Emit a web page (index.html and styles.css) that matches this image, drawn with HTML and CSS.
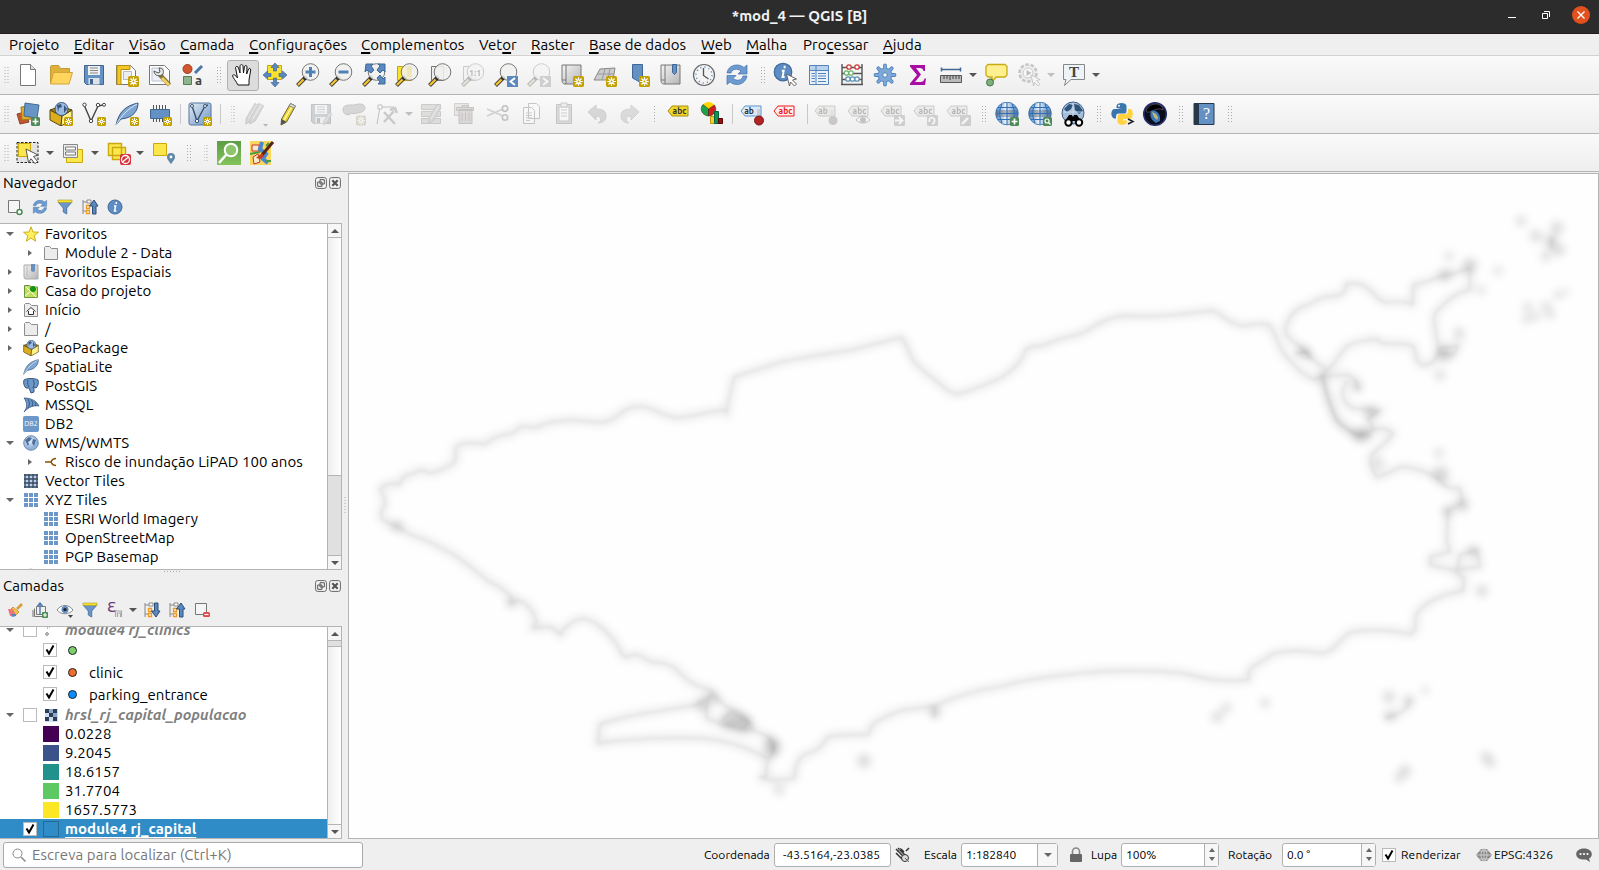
FILE: index.html
```html
<!DOCTYPE html>
<html lang="pt-BR">
<head>
<meta charset="utf-8">
<title>*mod_4 — QGIS [B]</title>
<link rel="stylesheet" href="styles.css">
</head>
<body>
<svg class="defs" width="0" height="0">
  <defs>
    <linearGradient id="gGrey" x1="0" y1="0" x2="1" y2="1"><stop offset="0" stop-color="#f4f4f4"/><stop offset="1" stop-color="#b5b5b5"/></linearGradient>
    <linearGradient id="gBlue" x1="0" y1="0" x2="1" y2="1"><stop offset="0" stop-color="#e4ecf5"/><stop offset="1" stop-color="#6c94c4"/></linearGradient>
    <linearGradient id="gGreen" x1="0" y1="0" x2="0" y2="1"><stop offset="0" stop-color="#5c9c45"/><stop offset="1" stop-color="#84c35c"/></linearGradient>
    <linearGradient id="gBand"><stop offset="0" stop-color="#4f88c8"/><stop offset=".45" stop-color="#f0f4f8"/><stop offset=".75" stop-color="#8fb2da"/><stop offset="1" stop-color="#4f88c8"/></linearGradient>
    <radialGradient id="gEarth" cx=".4" cy=".35"><stop offset="0" stop-color="#eef4fb"/><stop offset="1" stop-color="#8fb1da"/></radialGradient>
    <filter id="soft" x="-5%" y="-5%" width="110%" height="110%"><feGaussianBlur stdDeviation="4"/></filter>
    <filter id="softer" x="-5%" y="-5%" width="110%" height="110%"><feGaussianBlur stdDeviation="1.6"/></filter>
    <symbol id="star" viewBox="0 0 9 9"><rect width="9" height="9" rx="1.500" fill="#c4a000"/><path d="M4.500 1v7M1 4.500h7M2 2l5 5M7 2l-5 5" stroke="#fff" stroke-width="1"/><circle cx="4.500" cy="4.500" r="1.700" fill="#fff"/><circle cx="4.500" cy="4.500" r=".8" fill="#c4a000"/></symbol>
    <symbol id="plus" viewBox="0 0 9 9"><rect width="9" height="9" rx="1.500" fill="#4d8a57"/><path d="M4.500 1.500v6M1.500 4.500h6" stroke="#fff" stroke-width="1.700"/></symbol>
    <symbol id="lens" viewBox="0 0 24 24"><path d="M9 15L1.500 22.500" stroke="#3a3a3a" stroke-width="4"/><path d="M7.500 16.500L2 22" stroke="#f2c230" stroke-width="2.400"/><path d="M10.500 13.500l-2 2" stroke="#111" stroke-width="4"/><circle cx="14.500" cy="9" r="8.300" fill="#f0f0ee" fill-opacity=".88" stroke="#777" stroke-width="1"/></symbol>
    <symbol id="globe" viewBox="0 0 24 24"><circle cx="12" cy="11.500" r="11.300" fill="url(#gBand)" stroke="#4a7fb8"/><path d="M1 8h22v7H1z" fill="#4a4f58" fill-opacity=".35"/><path d="M3 5.500h18M1.500 11.500h21M3 17.500h18M7 2C4 8 4 15 7 21M17 2c3 6 3 13 0 19M12 .5v22" fill="none" stroke="#2f6fb5" stroke-width="1.100"/></symbol>
    <symbol id="earth" viewBox="0 0 16 16"><circle cx="8" cy="8" r="7.300" fill="url(#gEarth)" stroke="#6f8db1"/><path d="M2 5l4-3 3 1-2 3-2 1 1 2-1 2zM10 4l3 1-1 3-1 3-2-3z" fill="#4c6f9a"/></symbol>
    <symbol id="tag" viewBox="0 0 22 12"><path d="M1 6l4-5h16v10H5z"/></symbol>
    <symbol id="pencil" viewBox="0 0 24 24"><path d="M15.500 1.500l5 2.500-9 16L6 23l.5-6z" fill="#e9cf2f" stroke="#6e6536"/><path d="M18 3l-9 15" stroke="#fff7a0" stroke-width="1.500"/><path d="M6.500 17l5 3L6 23z" fill="#555"/><path d="M15.500 1.500l5 2.500-1.300 2.200-5-2.500z" fill="#ddd" stroke="#888"/></symbol>
    <symbol id="gpencil" viewBox="0 0 24 24"><path d="M15.500 1.500l5 2.500-9 16L6 23l.5-6z" fill="#a99" stroke="#777"/><path d="M18 3l-9 15" stroke="#ccc" stroke-width="1.500"/></symbol>
    <symbol id="disk" viewBox="0 0 24 24"><path d="M2.500 2.500h19v19h-17l-2-2z" fill="#6491c4" stroke="#42658f"/><path d="M6 3h12v9H6z" fill="#f0f0f0"/><path d="M8 5h8M8 7.500h8M8 10h8" stroke="#888"/><path d="M6.500 15h11v6.500h-11z" fill="#dfe3e8"/><path d="M8 16h3v5H8z" fill="#42658f"/></symbol>
    <symbol id="folder" viewBox="0 0 16 16"><path d="M1.500 14.500v-12l1-1h4l2 2h6v11z" fill="#ececec" stroke="#8d8d8d"/></symbol>
    <symbol id="refresh" viewBox="0 0 24 24"><path d="M2 10C3 4 8 2 12 2c3 0 5 1 7 2.500L22 2v9h-9l3-3c-4-3-9-2-10 2z" fill="#6d9bd0" stroke="#3f70ab" stroke-width=".7"/><path d="M22 13c-1 6-6 8.500-10 8.500-3 0-5-1-7-2.500l-3 2.500v-9h9l-3 3c4 3 9 2 10-2.500z" fill="#6d9bd0" stroke="#3f70ab" stroke-width=".7"/></symbol>
    <symbol id="box" viewBox="0 0 24 24"><path d="M1 8l12 6-1 10L1 18z" fill="#dcae1c" stroke="#574812"/><path d="M13 14l10-6v10l-11 6z" fill="#fff18a" stroke="#574812"/><path d="M1 8l11-4 11 4-10 6z" fill="#a9820d" stroke="#574812"/><circle cx="12.500" cy="7" r="6.500" fill="#9dbbe0" stroke="#3c5a80"/><path d="M8 3l4-1 1 3-3 1-1 4zM15 3l3 4-3 4z" fill="#34567f"/></symbol>
    <symbol id="feather" viewBox="0 0 24 24"><path d="M1 23C4 10 10 4 23 1c0 8-5 15-17 16z" fill="#7fa6d3" stroke="#35567f"/><path d="M1 23C7 13 13 7 22 2" fill="none" stroke="#dce8f5"/></symbol>
    <symbol id="funnel" viewBox="0 0 16 16"><path d="M1 3h14L9.700 9v6L6.300 13V9z" fill="#6b96c9" stroke="#4d78ab"/><path d="M1 1h14v2.500H1z" fill="#f5e02f" stroke="#a99a2e" stroke-width=".6"/></symbol>
    <symbol id="grid" viewBox="0 0 16 16"><path d="M1 1h4v4H1zm5 0h4v4H6zm5 0h4v4h-4zM1 6h4v4H1zm5 0h4v4H6zm5 0h4v4h-4zM1 11h4v4H1zm5 0h4v4H6zm5 0h4v4h-4z" fill="#6b97c9"/></symbol>
    <symbol id="treelist" viewBox="0 0 16 16"><path d="M1 1v14M1 3h4M1 12h4" stroke="#888" fill="none"/><path d="M5 1h4v3H5z" fill="#fff" stroke="#888"/><path d="M4.500 6.500h3v3h-3zM4.500 11.500h3v3h-3z" fill="#fff" stroke="#ee9a20" stroke-width="1.300"/></symbol>
    <symbol id="info" viewBox="0 0 16 16"><circle cx="8" cy="8" r="7" fill="#5d8cc4" stroke="#41699b"/><path d="M9.300 3v2M7 7h1.600L7.600 12h1.700" stroke="#fff" stroke-width="1.500" fill="none"/></symbol>
    <symbol id="scroll" viewBox="0 0 24 24"><path d="M6 2h15v19H5c-3 0-3-3-3-4V2z" fill="url(#gGrey)" stroke="#777"/><path d="M6 2v15H2M6 17v4" fill="none" stroke="#777"/></symbol>
    <symbol id="cursor" viewBox="0 0 12 14"><path d="M1 1l10 5-4 1 4 4-2 2-4-4-1 4z" fill="#fff" stroke="#666"/></symbol>
    <symbol id="restore" viewBox="0 0 12 12"><rect x=".6" y=".6" width="10.800" height="10.800" rx="2" fill="#f5f5f5" stroke="#666"/><path d="M5 2.700h4.300V7H5zM2.700 5H7v4.300H2.700z" fill="#f5f5f5" stroke="#555"/></symbol>
    <symbol id="shut" viewBox="0 0 12 12"><rect x=".6" y=".6" width="10.800" height="10.800" rx="2" fill="#f5f5f5" stroke="#666"/><path d="M3.300 3.300l5.400 5.400M8.700 3.300L3.300 8.700" stroke="#555" stroke-width="2.200"/></symbol>
    <symbol id="tick" viewBox="0 0 14 14"><path d="M3.500 6.500L6 10.500 10.500 2.500" fill="none" stroke="#000" stroke-width="2"/></symbol>
    <symbol id="layers" viewBox="0 0 24 24"><path d="M1 12l8-2 4 10-9 2z" fill="#c2592e" stroke="#8b4427"/><path d="M5 5l10-1v13l-9 1z" fill="#e6ab25" stroke="#9b781c"/><path d="M9 1l14 2-2 13-13-2z" fill="#6895c8" stroke="#44698f"/></symbol>
  </defs>
</svg>

<header class="titlebar">
  <span class="title">*mod_4 — QGIS [B]</span>
  <div class="winbtns">
    <svg width="12" height="18"><path d="M2 11.500h8" stroke="#fff"/></svg>
    <svg width="12" height="18"><path d="M3.500 7.500h5v5h-5zM5 5.500h5.500V11" fill="none" stroke="#fff" stroke-width="1"/></svg>
    <svg width="18" height="18"><circle cx="9" cy="9" r="9" fill="#e2501d"/><path d="M5.500 5.500l7 7M12.500 5.500l-7 7" stroke="#fff" stroke-width="1.300"/></svg>
  </div>
</header>

<nav class="menubar">
  <span class="m1">Pro<u>j</u>eto</span><span class="m2"><u>E</u>ditar</span><span class="m3"><u>V</u>isão</span><span class="m4"><u>C</u>amada</span><span class="m5"><u>C</u>onfigurações</span><span class="m6"><u>C</u>omplementos</span><span class="m7">Vet<u>o</u>r</span><span class="m8"><u>R</u>aster</span><span class="m9"><u>B</u>ase de dados</span><span class="m10"><u>W</u>eb</span><span class="m11"><u>M</u>alha</span><span class="m12">Pro<u>c</u>essar</span><span class="m13"><u>A</u>juda</span>
</nav>

<div class="toolbar">
  <i class="handle first"></i>
  <b><svg viewBox="0 0 24 24"><path d="M4.500 1.500h10l5 5v16h-15z" fill="#fff" stroke="#777"/><path d="M14.500 1.500v5h5" fill="#ddd" stroke="#777"/></svg></b>
  <b><svg viewBox="0 0 24 24"><path d="M1.500 20.500v-17l1-1h7l2 3h9v4" fill="#e0b13a" stroke="#c09a35"/><path d="M1.500 21l3-11.500h19L20 21z" fill="#ffd55e" stroke="#d2a63b"/></svg></b>
  <b><svg><use href="#disk"/></svg></b>
  <b><svg viewBox="0 0 24 24"><path d="M1.500 2.500h14l5 5v14h-19z" fill="#fff" stroke="#777"/><path d="M2 2.500h13v4H6v15H2z" fill="#f5c722" stroke="#b58e11"/><path d="M8.500 8.500h8v8h-8z" fill="#eee" stroke="#bbb"/><use href="#star" x="13" y="13" width="11" height="11"/></svg></b>
  <b><svg viewBox="0 0 24 24"><path d="M1.500 2.500h15l5 5v14h-20z" fill="#fff" stroke="#777"/><path d="M4 5h11v13H4z" fill="#edf1f7" stroke="#b9c3d0"/><path d="M12 12l9.500 10" stroke="#8a7735" stroke-width="4.500"/><path d="M14 15l7 7" stroke="#f0d264" stroke-width="2.800"/><path d="M6 8l4 2 2-1-1-4c4 0 6 4 3 7-4 2-8 0-8-4z" fill="#e8e8e8" stroke="#555"/></svg></b>
  <b><svg viewBox="0 0 24 24"><circle cx="6.500" cy="6" r="4.500" fill="#d2572e" stroke="#963f23"/><path d="M14 10l7-7" stroke="#4a76ab" stroke-width="3"/><path d="M2.500 13.500h8v8h-8z" fill="#8db48c" stroke="#547d56"/><text x="14" y="22" class="ga">a</text></svg></b>
  <i class="handle"></i>
  <b class="on"><svg viewBox="0 0 24 24"><path d="M7 22C5 18 2 15 1.500 12.500c1-1.500 3-.5 5 2.500L4.500 4.500C5 3 7 3 7.500 5L9 10V3c.5-2 2.500-2 3 0l.5 7 1-6.500c.5-1.500 2.500-1.200 2.500.5l-.3 7 1.800-5c.8-1.200 2.300-.6 2.200 1L18 17v5z" fill="#fff" stroke="#111"/></svg></b>
  <b><svg viewBox="0 0 24 24"><path d="M4.500 2.500h14v14h-14z" fill="#fbe32d" stroke="#c3a50c"/><path d="M12 0l4 4.500h-2.500V8h-3V4.500H8zM12 24l4-4.500h-2.500V15h-3v4.500H8zM0 12l4.500-4v2.500H8v3H4.500V16zM24 12l-4.500-4v2.500H16v3h3.500V16z" fill="#5a88bf" stroke="#3f6795" stroke-width=".7"/></svg></b>
  <b><svg viewBox="0 0 24 24"><use href="#lens"/><path d="M14.500 4v10M9.500 9h10" stroke="#5181b8" stroke-width="3"/></svg></b>
  <b><svg viewBox="0 0 24 24"><use href="#lens"/><path d="M9.500 9h10" stroke="#5181b8" stroke-width="3"/></svg></b>
  <b><svg viewBox="0 0 24 24"><use href="#lens"/><path d="M4 1h7L9 3l3 4-3 3-4-3-2 2zM23 1h-7l2 2-3 4 3 3 3-3 2 2zM23 21h-7l2-2-3-4 3-3 3 4 2-2z" fill="#5a88bf" stroke="#3f6795"/></svg></b>
  <b><svg viewBox="0 0 24 24"><path d="M2.500 3.500h14v14h-14z" fill="#fbe32d" stroke="#c3a50c"/><use href="#lens"/><path d="M12 4h4v10h-4z" fill="#ede7b8"/></svg></b>
  <b><svg viewBox="0 0 24 24"><path d="M3.500 3.500h12v14h-12z" fill="#eee" stroke="#777"/><use href="#lens"/></svg></b>
  <b class="off"><svg viewBox="0 0 24 24"><path d="M2.500 3.500h12v14h-12z" fill="#eee" stroke="#777"/><use href="#lens"/><text x="8" y="12.500" class="one">1:1</text></svg></b>
  <b><svg viewBox="0 0 24 24"><use href="#lens"/><path d="M13 13h11v11H13z" fill="#5a88bf"/><path d="M21 15l-4.500 3.500L21 22" stroke="#fff" stroke-width="2" fill="none"/></svg></b>
  <b class="off"><svg viewBox="0 0 24 24"><use href="#lens"/><path d="M13 13h11v11H13z" fill="#888"/><path d="M16 15l4.500 3.500L16 22" stroke="#fff" stroke-width="2" fill="none"/></svg></b>
  <b><svg viewBox="0 0 24 24"><use href="#scroll"/><use href="#star" x="13" y="13" width="11" height="11"/></svg></b>
  <b><svg viewBox="0 0 24 24"><path d="M1 17L7 6l15-1-2 12z" fill="#ccc" stroke="#888"/><path d="M4 11h17M12 6L9 17M17 5l-2 12" stroke="#999"/><use href="#star" x="13" y="13" width="11" height="11"/></svg></b>
  <b><svg viewBox="0 0 24 24"><path d="M6.500 1.500h10v20L12 18l-5.500-3z" fill="#6491c4" stroke="#3f6795"/><use href="#star" x="13" y="13" width="11" height="11"/></svg></b>
  <b><svg viewBox="0 0 24 24"><use href="#scroll"/><path d="M13.500 1.500h4v8l-2 2-2-2z" fill="#6491c4" stroke="#3f6795"/></svg></b>
  <b><svg viewBox="0 0 24 24"><circle cx="12" cy="12" r="10.500" fill="#f4f4f4" stroke="#666" stroke-width="1.200"/><circle cx="12" cy="12" r="8" fill="none" stroke="#6491c4" stroke-width="1.500" stroke-dasharray="1.200 3"/><path d="M11.500 5v7.500l5 3.500" fill="none" stroke="#555" stroke-width="1.300"/></svg></b>
  <b><svg><use href="#refresh"/></svg></b>
  <i class="handle"></i>
  <b><svg viewBox="0 0 24 24"><use href="#info" x="-1" y="-1" width="20" height="20"/><use href="#cursor" x="11" y="10" width="13" height="14"/></svg></b>
  <b><svg viewBox="0 0 24 24"><path d="M2.500 2.500h19v19h-19z" fill="#e9f1fb" stroke="#5283b9"/><path d="M3 3h18v4H3z" fill="#b8d2f0"/><path d="M3 7.500h18M9 3v18M4.500 10.500H8M4.500 13H8M4.500 15.500H8M4.500 18.500H8M11 10.500h8M11 13h8M11 15.500h8M11 18.500h8" stroke="#5283b9"/></svg></b>
  <b><svg viewBox="0 0 24 24"><path d="M2 1v21M22 1v21M1 21.500h22M2 4.500h20M2 10.500h20M2 16.500h20" stroke="#555" stroke-width="1.400"/><g fill="#fff" stroke-width="1.300"><g stroke="#cc3b3b"><circle cx="9" cy="4" r="2.200"/><circle cx="17" cy="4" r="2.200"/></g><g stroke="#6cb56c"><circle cx="6.500" cy="10" r="2.200"/><circle cx="11" cy="10" r="2.200"/></g><g stroke="#5c93b5"><circle cx="8" cy="16" r="2.200"/><circle cx="12.500" cy="16" r="2.200"/><circle cx="17" cy="16" r="2.200"/></g></g></svg></b>
  <b><svg viewBox="0 0 24 24"><path d="M12 2.500v19M2.500 12h19M5.300 5.300l13.400 13.400M18.700 5.300L5.300 18.700" stroke="#4f82bd" stroke-width="3.800" stroke-linecap="round"/><circle cx="12" cy="12" r="7.300" fill="#4f82bd"/><path d="M12 2.500v19M2.500 12h19M5.300 5.300l13.400 13.400M18.700 5.300L5.300 18.700" stroke="#7ea8d8" stroke-width="2.200" stroke-linecap="round"/><circle cx="12" cy="12" r="6.500" fill="#7ea8d8"/><circle cx="12" cy="12" r="2.300" fill="#f4f4f4" stroke="#4f82bd"/></svg></b>
  <b><svg viewBox="0 0 24 24"><path d="M4 2h15v6h-1.500c-.5-2-1.500-3-4-3H10l5 6.500L9 19h5.500c2.500 0 3.500-1.500 4-3.500H20L19 22H4v-1.500L11 12 4 3.500z" fill="#a90da3"/></svg></b>
  <b><svg viewBox="0 0 24 24"><path d="M2 6.500h20M2.500 4.500v4M21.500 4.500v4" stroke="#3f6795" stroke-width="1.500"/><path d="M1.500 12.500h21v7h-21z" fill="#bbb" stroke="#555"/><path d="M5 13v3M8 13v3M11 13v4M14 13v3M17 13v3M20 13v3" stroke="#444"/></svg></b>
  <em></em>
  <b><svg viewBox="0 0 24 24"><path d="M8 14l-3 7" stroke="#b79b0d"/><path d="M4 1.500h17l2 2V12l-2 2h-9l-3.500 4.500L8 14H4l-2-2V3.500z" fill="#fff08f" stroke="#c9aa10" stroke-width="1.300"/><circle cx="6" cy="19.500" r="3.500" fill="#7caf7c" stroke="#47744b"/></svg></b>
  <b class="off"><svg viewBox="0 0 24 24"><circle cx="11" cy="10" r="8.500" fill="#ddd" stroke="#666" stroke-width="2.500" stroke-dasharray="3.500 1.800"/><circle cx="11" cy="10" r="5" fill="#fff" stroke="#777"/><path d="M9.500 7l5 3-5 3z" fill="#555"/><use href="#cursor" x="13" y="11" width="11" height="13"/></svg></b>
  <em class="off"></em>
  <b><svg viewBox="0 0 24 24"><path d="M1.500 1.500h21v15H9l-6.500 6 1.500-6H1.500z" fill="#edf3f7" stroke="#888"/><text x="12" y="13.500" class="gt">T</text></svg></b>
  <em></em>
</div>

<div class="toolbar">
  <i class="handle first"></i>
  <b><svg viewBox="0 0 24 24"><use href="#layers"/><use href="#plus" x="15" y="15" width="9" height="9"/></svg></b>
  <b><svg viewBox="0 0 24 24"><use href="#box"/><use href="#star" x="15" y="15" width="9" height="9"/></svg></b>
  <b><svg viewBox="0 0 24 24"><path d="M2.500 4L9 19l7-15 5-1" fill="none" stroke="#444" stroke-width="1.400"/><g fill="#fff" stroke="#444"><circle cx="2.500" cy="2.800" r="1.700"/><circle cx="9" cy="19" r="1.700"/><circle cx="16" cy="3" r="1.700"/><circle cx="22" cy="2.800" r="1.500"/></g><use href="#star" x="15" y="15" width="9" height="9"/></svg></b>
  <b><svg viewBox="0 0 24 24"><use href="#feather"/><use href="#star" x="15" y="15" width="9" height="9"/></svg></b>
  <b class="vl"><svg viewBox="0 0 24 24"><path d="M4.500 3v17M7.500 3v17M10.500 3v17M13.500 3v17M16.500 3v17" stroke="#555"/><path d="M1.500 7.500h19v9h-19z" fill="#6491c4" stroke="#3f6795"/><use href="#star" x="14" y="15" width="9" height="9"/></svg></b>
  <s class="s6"></s>
  <b class="vl"><svg viewBox="0 0 24 24"><rect x="1" y="1" width="22" height="22" rx="2" fill="url(#gBlue)" stroke="#55779f"/><path d="M4 4l5 15 8-15 3-1" fill="none" stroke="#35506e" stroke-width="1.400"/><g fill="#fff" stroke="#35506e"><circle cx="9" cy="19" r="1.700"/><circle cx="4" cy="4" r="1.500"/><circle cx="17" cy="4" r="1.500"/></g><use href="#star" x="15" y="15" width="9" height="9"/></svg></b>
  <s class="s7"></s>
  <i class="handle wide"></i>
  <b class="off narrow"><svg viewBox="0 0 24 24"><use href="#gpencil" x="-3" y="0" width="23" height="23"/><use href="#gpencil" x="1" y="0" width="23" height="23"/><path d="M20 22h5l-2.500 2.500z" fill="#333"/></svg></b>
  <b><svg><use href="#pencil"/></svg></b>
  <b class="off push"><svg viewBox="0 0 24 24"><use href="#disk"/><use href="#gpencil" x="11" y="9" width="14" height="15"/></svg></b>
  <b class="off"><svg viewBox="0 0 24 24"><path d="M1 8c0-6 7-5 11-5 6-2 11-1 11 3s-6 5-8 5c-3 2-5-1-7 1s-7 0-7-4z" fill="#999" stroke="#666"/><use href="#star" x="14" y="13" width="10" height="11"/></svg></b>
  <b class="off"><svg viewBox="0 0 24 24"><path d="M5 5L2 22M5 5h14" stroke="#555"/><path d="M3 3h4v4H3z" fill="#fff" stroke="#555"/><path d="M9 20L19 9M9 10l11 12M15 8l5-2 2 5" stroke="#777" stroke-width="2.500" fill="none"/></svg></b>
  <em class="off e11"></em>
  <b class="off"><svg viewBox="0 0 24 24"><path d="M1.500 2.500h19v5h-19zM1.500 9.500h19v5h-19zM1.500 16.500h19v5h-19z" fill="#b5b587" stroke="#777"/><use href="#gpencil" x="3" y="0" width="21" height="24"/></svg></b>
  <b class="off"><svg viewBox="0 0 24 24"><path d="M1.500 1.500h14v12h-14z" fill="#ccb" stroke="#888"/><path d="M6 7.500h13v14H6zM3.500 5.500h17v3h-17zM9 3.500h6v2H9z" fill="#c99" stroke="#855"/><path d="M9 11v8M12.500 11v8M16 11v8" stroke="#855"/></svg></b>
  <b class="off"><svg viewBox="0 0 24 24"><path d="M1 7l16 7M1 14l16-7" stroke="#888" stroke-width="1.600"/><circle cx="19" cy="6.500" r="2.700" fill="none" stroke="#555" stroke-width="1.600"/><circle cx="19" cy="15.500" r="2.700" fill="none" stroke="#955" stroke-width="1.600"/></svg></b>
  <b class="off"><svg viewBox="0 0 24 24"><path d="M9.500 1.500h8l3 3v12h-11zM4.500 5.500h8l3 3v13h-11z" fill="#fff" stroke="#666"/><path d="M7 11h6M7 13.500h6M7 16h6M7 18.500h4" stroke="#777"/></svg></b>
  <b class="off"><svg viewBox="0 0 24 24"><path d="M4.500 2.500h15v19h-15z" fill="#aaa" stroke="#666"/><path d="M7 5h10v14H7z" fill="#fff" stroke="#777"/><path d="M9 1h6v4H9zM9 8h6M9 11h6M9 14h6" stroke="#777" fill="#ddd"/></svg></b>
  <b class="off"><svg viewBox="0 0 24 24"><path d="M3 10l8-7v4c8 0 10 3 10 7 0 5-4 7-8 7 4-2 4-7-2-7v4z" fill="#a99" stroke="#977"/></svg></b>
  <b class="off"><svg viewBox="0 0 24 24"><path d="M21 10l-8-7v4C5 7 3 10 3 14c0 5 4 7 8 7-4-2-4-7 2-7v4z" fill="#9a9" stroke="#797"/></svg></b>
  <i class="handle h15"></i>
  <b><svg viewBox="0 0 24 24"><use href="#tag" x="1" y="3" width="22" height="12" fill="#f0d62a" stroke="#a98e10"/><text x="13.500" y="12" class="abc">abc</text></svg></b>
  <b class="vl"><svg viewBox="0 0 24 24"><circle cx="8.500" cy="7" r="7" fill="#ffd200"/><path d="M8.500 7L3 2.500c-4 4-1 11 5.500 11.500z" fill="#1ca24a" stroke="#222" stroke-width=".5"/><path d="M8.500 7l6-4c3.500 6-1 11-6 11z" fill="#cf2020" stroke="#222" stroke-width=".5"/><path d="M10.500 14.500h4v7h-4z" fill="#ffc83a" stroke="#b90"/><path d="M14.500 9.500h4v12h-4z" fill="#129447" stroke="#064"/><path d="M18.500 16.500h4v5h-4z" fill="#9a1414" stroke="#500"/></svg></b>
  <s class="s7"></s>
  <b class="vl"><svg viewBox="0 0 24 24"><use href="#tag" x="0" y="3" width="22" height="12" fill="#dcebfb" stroke="#5c93cf"/><text x="9" y="12" class="abc">ab</text><path d="M18.500 7v10" stroke="#ccc" stroke-width="3"/><circle cx="19" cy="18.500" r="4.500" fill="#b02424" stroke="#7d1616"/></svg></b>
  <b><svg viewBox="0 0 24 24"><use href="#tag" x="1" y="3" width="22" height="12" fill="#fff0f0" stroke="#f01818"/><text x="13.500" y="12" class="abc red">abc</text></svg></b>
  <s class="s8"></s>
  <b class="off"><svg viewBox="0 0 24 24"><use href="#tag" x="0" y="3" width="22" height="12" fill="#d8d8b8" stroke="#777"/><text x="9" y="12" class="abc">ab</text><path d="M18 8v10" stroke="#bbb" stroke-width="3"/><circle cx="19" cy="18.500" r="4.500" fill="#a66"/></svg></b>
  <b class="off"><svg viewBox="0 0 24 24"><use href="#tag" x="0" y="3" width="22" height="12" fill="#d8d8b8" stroke="#777"/><text x="12.500" y="12" class="abc">abc</text><path d="M9 18c4-5 10-5 14 0-4 4-10 4-14 0z" fill="#fff" stroke="#555"/><circle cx="16" cy="18" r="3" fill="#666"/></svg></b>
  <b class="off"><svg viewBox="0 0 24 24"><use href="#tag" x="0" y="3" width="22" height="12" fill="#d8d8b8" stroke="#777"/><text x="12.500" y="12" class="abc">abc</text><rect x="14" y="13" width="11" height="11" rx="1" fill="#888"/><path d="M15 18.500h7M19 15l3.500 3.500L19 22" stroke="#fff" stroke-width="1.800" fill="none"/></svg></b>
  <b class="off"><svg viewBox="0 0 24 24"><use href="#tag" x="0" y="3" width="22" height="12" fill="#d8d8b8" stroke="#777"/><text x="12.500" y="12" class="abc">abc</text><rect x="14" y="13" width="11" height="11" rx="1" fill="#888"/><path d="M16.500 20c-1-3 1-5 3.500-4s2 5-1 6" stroke="#fff" stroke-width="1.800" fill="none"/></svg></b>
  <b class="off"><svg viewBox="0 0 24 24"><use href="#tag" x="0" y="3" width="22" height="12" fill="#d8d8b8" stroke="#777"/><text x="12.500" y="12" class="abc">abc</text><rect x="14" y="13" width="11" height="11" rx="1" fill="#888"/><path d="M16 22l6-6" stroke="#fff" stroke-width="2.400"/></svg></b>
  <i class="handle"></i>
  <b><svg viewBox="0 0 24 24"><use href="#globe"/><use href="#plus" x="15" y="15" width="9" height="9"/></svg></b>
  <b><svg viewBox="0 0 24 24"><use href="#globe"/><rect x="15" y="15" width="9" height="9" rx="1.500" fill="#4d8a57"/><circle cx="19" cy="19" r="2" fill="none" stroke="#fff" stroke-width="1.200"/><path d="M20.500 20.500l2 2" stroke="#fff" stroke-width="1.500"/></svg></b>
  <b><svg viewBox="0 0 24 24"><circle cx="12" cy="11" r="11" fill="#a5bedb" stroke="#3d5d85"/><path d="M3 7l5-5 4 1-2 4-4 3zM13 2l5 1 4 6-4 3-4-4z" fill="#2f5379"/><path d="M2 10h20M12 1v14" stroke="#dbe6f2" stroke-width=".8"/><path d="M8 13h3l1 2 1-2h3l4 6H4z" fill="#000"/><circle cx="7.500" cy="20.500" r="3.200" fill="#fff" stroke="#000" stroke-width="2"/><circle cx="18" cy="20.500" r="3.200" fill="#fff" stroke="#000" stroke-width="2"/></svg></b>
  <i class="handle"></i>
  <b class="vl"><svg viewBox="0 0 24 24"><path d="M5.500 6V4c0-4 10-4 10 0v5c0 2-1 2.500-3 2.500H8c-2 0-3 1-3 3v2H3c-4-2-3-9 0-9.500h7.500" fill="#3a76ad"/><path d="M17 7h2.500c3 1 3 8 0 10H12v1.500h4V20c-1 4-9 3.500-9.500 0v-5c0-2 1-3 3-3h4.500c2 0 3-1 3-3z" fill="#ffd23f"/><circle cx="8" cy="3.700" r="1" fill="#fff"/><path d="M17 17l5 2.500-5 2.500" fill="none" stroke="#222" stroke-width="1.500"/></svg></b>
  <b><svg viewBox="0 0 24 24"><circle cx="12" cy="12" r="11.300" fill="#0a0d1c" stroke="#27336f" stroke-width="1.500"/><path d="M3 9c1-4 5-7 10-7 4 0 7 3 7 6-3-2-7-1-11 1-2 1-5 2-6 0z" fill="#000" stroke="#667" stroke-width=".7"/><path d="M8 9c4-2 10 2 9 10l-4 2c-4-2-7-7-5-12z" fill="#3c78b5"/><path d="M9 10l4 2 2 4-1 2-3-3z" fill="#c4b87a"/></svg></b>
  <i class="handle"></i>
  <b><svg viewBox="0 0 24 24"><path d="M2 1.500h20v21H2z" fill="#6491c4" stroke="#26384c"/><path d="M2 1.500h5v21H2z" fill="#26384c"/><text x="14.500" y="17" class="q">?</text></svg></b>
  <i class="handle"></i>
</div>

<div class="toolbar last">
  <i class="handle first"></i>
  <b><svg viewBox="0 0 24 24"><path d="M1 1.500h21v20H1z" fill="#e4e4e4" stroke="#222" stroke-dasharray="2.500 1.500"/><path d="M2.500 2.500h12v13h-12z" fill="#fbe64b" stroke="#c9a90e"/><path d="M10 8l12 6-4.500 1.500 4 5-2.500 2.200-4-5-2.500 3.800z" fill="#fff" stroke="#555"/></svg></b>
  <em></em>
  <b><svg viewBox="0 0 24 24"><path d="M5.500 8.500h16v13h-16z" fill="#fbe64b" stroke="#c9a90e"/><path d="M2.500 3.500h14v13h-14z" fill="#eee" stroke="#888"/><path d="M4.500 6h10v3h-10zM4.500 11h10v3h-10z" fill="#fff" stroke="#777"/></svg></b>
  <em></em>
  <b class="vl"><svg viewBox="0 0 24 24"><path d="M1.500 2.500h13v12h-13zM5.500 6.500h13v12h-13z" fill="#fbe64b" stroke="#c9a90e" stroke-width="1.400"/><rect x="13" y="13" width="11" height="11" rx="2" fill="#d8323b"/><circle cx="18.500" cy="18.500" r="4" fill="#d8323b" stroke="#fff" stroke-width="1.300"/><path d="M21.500 16l-6 5" stroke="#fff" stroke-width="1.300"/></svg></b>
  <em></em>
  <b class="vl"><svg viewBox="0 0 24 24"><path d="M1.500 2.500h13v12h-13z" fill="#fbe64b" stroke="#c9a90e"/><path d="M19 23c-3-4-4-5-4-7a4 4 0 018 0c0 2-1 3-4 7z" fill="#5f87a8"/><circle cx="19" cy="16" r="1.400" fill="#fff"/></svg></b>
  <i class="handle"></i>
  <i class="handle wide"></i>
  <b><svg viewBox="0 0 24 24"><path d="M0 0h24v24H0z" fill="url(#gGreen)"/><path d="M2 22l7-8" stroke="#fff" stroke-width="2.600"/><circle cx="14" cy="9" r="6.300" fill="#8cc56c" stroke="#fff" stroke-width="2"/></svg></b>
  <b><svg viewBox="0 0 24 24"><path d="M0 0h21v24H0z" fill="#f8d75c"/><path d="M2 4h7v6H2zM3 16l5-3 2 8-6 2z" fill="#f3edcd" stroke="#c33" stroke-width="1"/><path d="M12 1l-2 7 6 5-3 5 5 4" fill="none" stroke="#4b86d1" stroke-width="4"/><path d="M0 13l10-2M15 20h6M16 5l3-3" stroke="#4c9a43" stroke-width="2"/><path d="M23 1L12 14" stroke="#5b2412" stroke-width="3"/><path d="M12 12l-6 5 5 1 3-3z" fill="#c3401a"/></svg></b>
</div>

<main class="work">
  <aside class="side">
    <section class="dock nav">
      <div class="dockhead"><span>Navegador</span><svg class="db"><use href="#restore"/></svg><svg class="db"><use href="#shut"/></svg></div>
      <div class="docktools">
        <svg viewBox="0 0 16 16"><path d="M1.500 1.500h11v12h-11z" fill="#f5f5f5" stroke="#777"/><circle cx="12.500" cy="13" r="2.500" fill="#fff" stroke="#4d8a57" stroke-width="1.500"/></svg>
        <svg><use href="#refresh"/></svg>
        <svg><use href="#funnel"/></svg>
        <svg viewBox="0 0 16 16"><use href="#treelist"/><path d="M10.500 15V7H7.500L12 1l4 6h-2v8z" fill="#5a88bf" stroke="#2e4d73"/></svg>
        <svg><use href="#info"/></svg>
      </div>
      <div class="treebox">
        <div class="tree">
          <div class="r"><i class="x d"></i><svg viewBox="0 0 16 16"><path d="M8 .8l2 5.200 5.500.2-4.300 3.500 1.500 5.500L8 12l-4.700 3.200 1.500-5.500L.5 6.200 6 6z" fill="#fdf05a" stroke="#cfae14"/></svg><span>Favoritos</span></div>
          <div class="r l1"><i class="x"></i><svg><use href="#folder"/></svg><span>Module 2 - Data</span></div>
          <div class="r"><i class="x"></i><svg viewBox="0 0 16 16"><path d="M1 1h14v14H2L1 13z" fill="url(#gGrey)" stroke="#aaa"/><path d="M4 1v12" stroke="#bbb"/><path d="M8 0h4v7l-2 1-2-1z" fill="#6b8fbc"/></svg><span>Favoritos Espaciais</span></div>
          <div class="r"><i class="x"></i><svg viewBox="0 0 16 16"><path d="M1.500 14.500v-12h5l2 1.500h6v10.500z" fill="#bfdf5a" stroke="#6d9640"/><path d="M2 13l11-9M3 4l10 10" stroke="#fff"/><circle cx="10" cy="6" r="3" fill="#149414"/></svg><span>Casa do projeto</span></div>
          <div class="r"><i class="x"></i><svg viewBox="0 0 16 16"><use href="#folder"/><path d="M3.500 9.500L8 5.500l4.500 4M5.500 9v3.500h5V9" fill="#fff" stroke="#333"/></svg><span>Início</span></div>
          <div class="r"><i class="x"></i><svg><use href="#folder"/></svg><span>/</span></div>
          <div class="r"><i class="x"></i><svg><use href="#box"/></svg><span>GeoPackage</span></div>
          <div class="r"><i class="x n"></i><svg><use href="#feather"/></svg><span>SpatiaLite</span></div>
          <div class="r"><i class="x n"></i><svg viewBox="0 0 16 16"><path d="M1 2c3-2 11-2 14 0 1 3 0 6-2 8l-2-1v5l-3 1-2-5-3 0C1 8 0 5 1 2z" fill="#6b97c9" stroke="#38587e"/><path d="M5 2c-1 4 0 5 1 7M10 2c2 3 1 5 0 8" fill="none" stroke="#38587e"/></svg><span>PostGIS</span></div>
          <div class="r"><i class="x n"></i><svg viewBox="0 0 16 16"><path d="M1 1c6 0 12 2 15 8-6-1-10 1-15 6 4-5 3-10 0-14z" fill="#6b97c9" stroke="#38587e" stroke-width=".8"/><path d="M5 2c2 4 2 6 0 9M8.500 3c1.500 3 1.500 4 .5 6.500M12 5c1 2 1 2 .5 4" fill="none" stroke="#38587e"/></svg><span>MSSQL</span></div>
          <div class="r"><i class="x n"></i><svg viewBox="0 0 16 16"><rect width="16" height="16" rx="2" fill="#6b97c9"/><text x="8" y="10" class="db2">DB2</text></svg><span>DB2</span></div>
          <div class="r"><i class="x d"></i><svg><use href="#earth"/></svg><span>WMS/WMTS</span></div>
          <div class="r l1"><i class="x"></i><svg viewBox="0 0 16 16"><path d="M2 8h6M13 4.500c-3 0-4 1-5 3.500 1 2.500 2 3.500 5 3.500" fill="none" stroke="#8a5200" stroke-width="1.500"/></svg><span>Risco de inundação LiPAD 100 anos</span></div>
          <div class="r"><i class="x n"></i><svg viewBox="0 0 16 16"><path d="M1.500 1.500h13v13h-13z" fill="#b8d2f0"/><path d="M2 1v14M6 1v14M10 1v14M14 1v14M1 2h14M1 6h14M1 10h14M1 14h14" stroke="#3a4a60" stroke-width="1.400"/></svg><span>Vector Tiles</span></div>
          <div class="r"><i class="x d"></i><svg><use href="#grid"/></svg><span>XYZ Tiles</span></div>
          <div class="r l1"><i class="x n"></i><svg><use href="#grid"/></svg><span>ESRI World Imagery</span></div>
          <div class="r l1"><i class="x n"></i><svg><use href="#grid"/></svg><span>OpenStreetMap</span></div>
          <div class="r l1"><i class="x n"></i><svg><use href="#grid"/></svg><span>PGP Basemap</span></div>
          <div class="r"><i class="x n"></i><svg viewBox="0 0 16 16"><circle cx="8" cy="8" r="7.300" fill="#4a6f9b"/></svg></div>
        </div>
        <div class="scroll"><i class="up"></i><div class="track"></div><div class="thumb tall"></div><i class="down"></i></div>
      </div>
    </section>
    <div class="hsplit"></div>
    <section class="dock lay">
      <div class="dockhead"><span>Camadas</span><svg class="db"><use href="#restore"/></svg><svg class="db"><use href="#shut"/></svg></div>
      <div class="docktools">
        <svg viewBox="0 0 16 16"><path d="M15 2l-5 5" stroke="#d99a3a" stroke-width="2.500"/><path d="M6 5l6 5-3 3-6-5z" fill="#f5c842" stroke="#b27a20" stroke-width=".7"/><path d="M1 7l5 0 3 6-6 1z" fill="#e77"/><path d="M4 12l5 0v2l-4 1z" fill="#5485c0"/></svg>
        <svg viewBox="0 0 16 16"><path d="M4.500 4.500h9v8h-9zM2.500 6.500v8h9M1 8v7" fill="none" stroke="#777"/><path d="M8 12V2M5.500 4L8 1l2.500 3" fill="none" stroke="#4d78ab" stroke-width="1.400"/><use href="#plus" x="10" y="10" width="6" height="6"/></svg>
        <svg viewBox="0 0 16 16"><path d="M0 8c4-6 12-6 16 0-4 5-12 5-16 0z" fill="#fff" stroke="#888"/><circle cx="8" cy="7.500" r="3.500" fill="#5a88bf"/><circle cx="8" cy="7.500" r="1.600" fill="#222"/><path d="M11 13h5l-2.500 3z" fill="#444"/></svg>
        <svg><use href="#funnel"/></svg>
        <svg class="eps" viewBox="0 0 16 16"><text x="0" y="10" class="ep">ε</text><path d="M8.500 15v-6h6v6M10.500 15v-4h3v4" fill="none" stroke="#aaa" stroke-width="1.200"/></svg>
        <em></em>
        <svg viewBox="0 0 16 16"><use href="#treelist"/><path d="M10.500 1v8H7.500L12 15l4-6h-2V1z" fill="#5a88bf" stroke="#2e4d73"/></svg>
        <svg viewBox="0 0 16 16"><use href="#treelist"/><path d="M10.500 15V7H7.500L12 1l4 6h-2v8z" fill="#5a88bf" stroke="#2e4d73"/></svg>
        <svg viewBox="0 0 16 16"><path d="M1.500 1.500h11v11h-11z" fill="#f5f5f5" stroke="#777"/><rect x="9" y="10" width="7" height="5" rx="1.500" fill="#e04848"/><path d="M10.500 12.500h4" stroke="#fff" stroke-width="1.200"/></svg>
      </div>
      <div class="treebox">
        <div class="tree up4">
          <div class="r"><i class="x d"></i><i class="ck"></i><svg viewBox="0 0 16 16"><circle cx="4" cy="12" r="1.300" fill="none" stroke="#777"/><path d="M4 6h1M6 5h1" stroke="#777"/></svg><span class="it">module4 rj_clinics</span></div>
          <div class="r t"><i class="ck"><svg><use href="#tick"/></svg></i><i class="dot g"></i></div>
          <div class="r t"><i class="ck"><svg><use href="#tick"/></svg></i><i class="dot o"></i><span>clinic</span></div>
          <div class="r t"><i class="ck"><svg><use href="#tick"/></svg></i><i class="dot bl"></i><span>parking_entrance</span></div>
          <div class="r"><i class="x d"></i><i class="ck"></i><svg viewBox="0 0 16 16"><path d="M2 2h13v13H2z" fill="#cfdcee"/><path d="M2 2h4v4H2zM10 2h4v4h-4zM6 6h4v4H6zM2 10h4v4H2zM10 10h4v4h-4z" fill="#2c3e55"/><path d="M6 2h4v4H6zM10 6h4v4h-4z" fill="#89a8cf"/></svg><span class="it">hrsl_rj_capital_populacao</span></div>
          <div class="r v"><i class="sw c1"></i><span>0.0228</span></div>
          <div class="r v"><i class="sw c2"></i><span>9.2045</span></div>
          <div class="r v"><i class="sw c3"></i><span>18.6157</span></div>
          <div class="r v"><i class="sw c4"></i><span>31.7704</span></div>
          <div class="r v"><i class="sw c5"></i><span>1657.5773</span></div>
          <div class="r sel"><i class="x n"></i><i class="ck"><svg><use href="#tick"/></svg></i><i class="sw empty"></i><span>module4 rj_capital</span></div>
        </div>
        <div class="scroll"><i class="up"></i><div class="thumb tiny"></div><div class="track"></div><i class="down"></i></div>
      </div>
    </section>
  </aside>
  <div class="vsplit"></div>
  <div class="map">
    <svg viewBox="349 174 1249 664" width="1249" height="664" fill="none" stroke="#000">
      <defs>
        <g id="coast">
          <g transform="translate(350 300) scale(.4146 .3333)">
            <path d="M1568 235C1530 255 1500 272 1463 283L1440 270C1410 235 1375 210 1357 180 1348 155 1345 135 1330 112 1280 125 1230 148 1180 156 1100 172 1060 178 1030 190L928 230C918 260 914 300 908 338L905 330C870 332 830 350 785 353 760 350 740 330 715 322 690 315 672 320 655 338 640 355 620 368 600 367 570 366 545 358 525 361 490 366 470 366 455 380 435 388 425 375 410 380 400 395 390 406 375 404 350 403 340 425 325 432 300 428 270 425 256 440 250 460 260 475 252 488 235 500 210 520 190 519 175 508 165 505 155 520 140 528 130 520 125 540 118 560 115 558 112 550 100 548 80 555 73 565 75 580 88 595 85 615 75 630 70 640 78 658 90 672 100 672 112 678L125 688C150 710 170 712 190 725L245 760C290 795 310 820 335 845 355 855 375 870 388 890V910L405 900C430 910 440 930 450 965L440 985 485 980 508 1005 515 988C535 965 550 955 565 956 600 965 620 1000 640 1025L655 1060 662 1072 690 1063C710 1070 720 1085 730 1087 760 1085 780 1095 795 1118 815 1145 835 1160 870 1170L880 1190C900 1215 915 1230 940 1238L965 1270 970 1290 1010 1310 1025 1330 1015 1370 1005 1390V1430L985 1432 1015 1440 1060 1438 1072 1435 1075 1400C1085 1370 1095 1362 1110 1358 1140 1345 1145 1325 1150 1312 1180 1302 1220 1306 1250 1303L1262 1270C1290 1250 1320 1230 1350 1228L1410 1218C1450 1195 1500 1172 1568 1160"/>
            <path d="M865 1190L835 1215 720 1238C680 1245 640 1258 603 1272L597 1330C700 1312 780 1312 850 1315 920 1322 970 1350 1005 1375M870 1180L860 1215V1255L900 1275 965 1290M1410 1218V1250M895 1265L920 1235 960 1265 950 1290 905 1270M1010 1315L1025 1360"/>
          </g>
          <g transform="translate(950 290) scale(.4139 .3444)">
            <path d="M122 256L135 245C160 225 175 205 182 175 195 158 215 163 225 162 265 135 305 135 325 122 350 105 370 82 420 75 480 78 520 76 560 70L635 60C660 70 665 95 710 105 730 98 750 96 770 100 790 130 795 170 810 190 830 210 840 240 880 260L905 245"/>
            <path d="M1240 875C1190 880 1140 910 1125 945V985L1115 1000C1070 985 1000 985 965 995 935 1020 935 1045 900 1055 850 1045 820 1045 780 1055 760 1080 730 1085 722 1105V1132C640 1140 610 1125 560 1112 400 1095 280 1115 200 1130 170 1137 145 1143 122 1152M1110 1190C1108 1215 1090 1230 1050 1243"/>
          </g>
          <g transform="translate(1240 190) scale(.3333)">
            <path d="M255 535C225 520 205 490 180 470 140 440 130 430 140 400 155 365 175 350 205 345 250 310 280 325 305 312 325 300 315 290 318 282 350 275 375 285 390 300 410 320 420 335 440 338 470 333 500 335 518 343L520 285 560 275 600 260 640 250 690 235V300C660 305 630 320 605 350 580 365 582 380 583 400 588 440 595 460 597 490L575 520 548 528 530 510 522 470C500 455 460 465 425 460L415 448C390 448 340 455 320 470 295 490 285 530 262 538L245 560 305 555C340 550 355 575 352 600M325 575C300 590 300 640 340 655L420 662 385 685 400 720"/>
            <path d="M245 560C255 600 270 650 285 680 300 715 330 722 360 735L400 720C430 710 450 720 460 730 440 760 420 770 400 790 380 810 400 840 410 862 440 855 460 835 490 830 540 835 570 850 595 865 620 900 640 895 660 895L668 940 625 960 620 1050 630 1085 572 1100 570 1125 640 1140 720 1130 710 1080 660 1095 650 1150 672 1165 670 1205"/>
            <path d="M250 565C258 610 272 650 290 690L345 735 395 738M165 490L200 485 210 510M600 490L640 495 655 465 600 475M935 140L935 180"/>
          </g>
        </g>
      </defs>
      <use href="#coast" filter="url(#soft)" stroke-width="5.500" stroke-opacity=".11"/>
      <use href="#coast" filter="url(#softer)" stroke-width="2" stroke-opacity=".05"/>
      <g filter="url(#soft)" fill="#000" fill-opacity=".14" stroke="none">
        <circle cx="1521" cy="221" r="5"/><circle cx="1536" cy="236" r="6"/><circle cx="1557" cy="228" r="6.500"/><circle cx="1551" cy="241" r="6"/><circle cx="1559" cy="250" r="6"/><circle cx="1546" cy="256" r="5"/><circle cx="1449" cy="256" r="4"/><circle cx="1470" cy="265" r="7"/><circle cx="1445" cy="275" r="6"/><circle cx="1481" cy="290" r="4"/><circle cx="1498" cy="271" r="4"/><circle cx="1528" cy="307" r="4.500"/><circle cx="1527" cy="319" r="4.500"/><circle cx="1536" cy="316" r="4"/><circle cx="1546" cy="306" r="4.500"/><circle cx="1550" cy="314" r="4.500"/><circle cx="1558" cy="295" r="4"/><circle cx="1566" cy="292" r="3"/><circle cx="1459" cy="333" r="5.500"/><circle cx="1444" cy="355" r="7"/><circle cx="1440" cy="375" r="5"/><circle cx="1304" cy="352" r="5"/><circle cx="1357" cy="387" r="5"/><circle cx="1371" cy="412" r="6"/><circle cx="1361" cy="435" r="8"/><circle cx="1379" cy="463" r="5"/><circle cx="1439" cy="453" r="4.500"/><circle cx="1441" cy="474" r="8"/><circle cx="1463" cy="505" r="6"/><circle cx="1447" cy="511" r="5"/><circle cx="1473" cy="551" r="5"/><circle cx="1482" cy="591" r="6"/><circle cx="397" cy="526" r="5.500"/><circle cx="511" cy="603" r="4"/><circle cx="864" cy="761" r="7"/><circle cx="779" cy="790" r="5"/><circle cx="702" cy="705" r="6"/><circle cx="714" cy="698" r="5"/><circle cx="730" cy="722" r="8"/><circle cx="742" cy="724" r="9"/><circle cx="772" cy="747" r="9"/><circle cx="935" cy="713" r="5"/><circle cx="1389" cy="697" r="6"/><circle cx="1409" cy="700" r="5"/><circle cx="1390" cy="716" r="5"/><circle cx="1425" cy="690" r="3.500"/><circle cx="1265" cy="703" r="4.500"/><circle cx="1217" cy="717" r="5.500"/><circle cx="1226" cy="708" r="5"/><circle cx="1405" cy="771" r="6"/><circle cx="1399" cy="778" r="4.500"/><circle cx="1486" cy="757" r="5.500"/><circle cx="1491" cy="763" r="4.500"/>
      </g>
    </svg>
  </div>
</main>

<footer class="status">
  <div class="search"><svg viewBox="0 0 14 14"><circle cx="5.500" cy="5.500" r="4.500" fill="none" stroke="#888"/><path d="M9 9l4.500 4.500" stroke="#888" stroke-width="1.500"/></svg><span>Escreva para localizar (Ctrl+K)</span></div>
  <span class="lb coord">Coordenada</span>
  <div class="fld f1">-43.5164,-23.0385</div>
  <svg class="mouse" viewBox="0 0 16 16"><path d="M1 2l9 9M3 1l8 8M1 6l7 7M6 2l3 3M14 1l-3 3" stroke="#333" stroke-width="1.500"/><circle cx="10" cy="11" r="3.500" fill="#ddd" stroke="#333"/><path d="M10 11l4 4M2 5l4-4" stroke="#666"/></svg>
  <span class="lb esc">Escala</span>
  <div class="fld f2"><span>1:182840</span><i class="combo"></i></div>
  <svg class="lock" viewBox="0 0 12 16"><path d="M2.500 8V4.500a3.500 3.500 0 017 0V8" fill="none" stroke="#888" stroke-width="1.600"/><rect y="7" width="12" height="8" rx="1" fill="#666"/></svg>
  <span class="lb lupa">Lupa</span>
  <div class="fld f3"><span>100%</span><i class="spin"></i></div>
  <span class="lb rot">Rotação</span>
  <div class="fld f4"><span>0.0 °</span><i class="spin"></i></div>
  <i class="ck rend"><svg><use href="#tick"/></svg></i>
  <span class="lb ren">Renderizar</span>
  <svg class="crs" viewBox="0 0 16 16"><path d="M0 8l5-6h6l5 6-5 6H5z" fill="#888"/><path d="M0 8h16M8 1v14M3 4h10M3 12h10M8 1C4 5 4 11 8 15M8 1c4 4 4 10 0 14" fill="none" stroke="#ddd" stroke-width=".8"/></svg>
  <span class="lb epsg">EPSG:4326</span>
  <svg class="bub" viewBox="0 0 16 16"><path d="M8 1.500c5 0 7.800 2.500 7.800 5.500 0 2-1 3.500-2.800 4.500l1 3.500-4-2.500C4 13 .2 11 .2 7 .2 4 3 1.500 8 1.500z" fill="#666"/><circle cx="4.500" cy="7" r="1.100" fill="#fff"/><circle cx="8" cy="7" r="1.100" fill="#fff"/><circle cx="11.500" cy="7" r="1.100" fill="#fff"/></svg>
</footer>
</body>
</html>
```
FILE: styles.css
```css
* { box-sizing: border-box; }
body {
  margin: 0;
  width: 1599px;
  height: 870px;
  overflow: hidden;
  display: flex;
  flex-direction: column;
  background: #efefef;
  color: #000;
  font-family: Ubuntu, "Noto Sans", "Open Sans", sans-serif;
  font-size: 15px;
}
svg { display: block; flex: none; overflow: visible; }
.defs { position: absolute; }
i, em, s, b { font-style: normal; text-decoration: none; flex: none; }

.titlebar {
  height: 34px;
  flex: none;
  display: grid;
  grid-template-columns: 1fr auto 1fr;
  align-items: center;
  background: #2c2c2c;
  border-bottom: 1px solid #231a22;
  color: #f2f2f2;
}
.title { grid-column: 2; font-weight: 700; font-size: 15px; padding-bottom: 2px; }
.winbtns { justify-self: end; display: flex; gap: 21px; padding: 0 9px 3px 0; }

.menubar { height: 22px; flex: none; display: flex; padding-left: 9px; border-bottom: 1px solid #d2d2d2; line-height: 22px; white-space: nowrap; letter-spacing: .05px; }
.menubar span { flex: none; }
.menubar u { text-underline-offset: 2px; text-decoration-thickness: 1.500px; text-decoration-skip-ink: none; }
.m1 { width: 65px; } .m2 { width: 55px; } .m3 { width: 51px; } .m4 { width: 69px; }
.m5 { width: 112px; } .m6 { width: 118px; } .m7 { width: 52px; } .m8 { width: 58px; }
.m9 { width: 112px; } .m10 { width: 45px; } .m11 { width: 57px; } .m12 { width: 80px; } .m13 { width: 60px; }

.toolbar {
  height: 39px;
  flex: none;
  display: flex;
  align-items: center;
  background: linear-gradient(#fafafa, #eee);
  border-bottom: 1px solid #b4b4b4;
}
.toolbar.last { height: 38px; }
.toolbar b { width: 33px; height: 31px; display: flex; align-items: center; justify-content: center; }
.toolbar b.narrow { width: 31px; }
.toolbar b.push { margin-left: 1px; }
.toolbar b.vl { padding-left: 2px; }
.toolbar b svg { width: 24px; height: 24px; }
.toolbar b.on { background: #dcdcdc; border: 1px solid #b0b0b0; border-radius: 3px; width: 32px; margin-left: 1px; }
.off { opacity: .33; filter: grayscale(.8); }
.handle { width: 16px; height: 18px; background: radial-gradient(circle, #aaa 0 .7px, transparent .9px) 6.500px 0 / 3px 3px; background-clip: content-box; padding: 0 4.500px 0 6.500px; }
.handle.first { width: 11.500px; padding: 0 3px 0 3.500px; background-position: 3px 0; }
.handle.wide { width: 17px; padding-left: 8px; }
.handle.h15 { width: 15px; }
em { width: 12px; display: flex; justify-content: center; padding-right: 2px; }
em::before { content: ""; border: 4px solid transparent; border-top-color: #555; border-bottom: 0; }
.e11 { width: 12px; padding: 0 2px 0 0; }
s { height: 20px; border-left: 1px solid #c8c8c8; }
.s6 { width: 3px; margin-left: 3px; } .s7 { width: 3px; margin-left: 4px; } .s8 { width: 3px; margin-left: 6px; }

text { font-family: Ubuntu, "Noto Sans", sans-serif; stroke: none; }
.ga { font-size: 13px; fill: #444; }
.one { font-size: 9px; font-weight: 700; fill: #444; }
.gt { font: 15px "Liberation Serif", serif; font-weight: 700; text-anchor: middle; fill: #444; }
.abc { font-size: 8.500px; font-weight: 700; text-anchor: middle; fill: #333; }
.abc.red { fill: #f01818; }
.q { font: 16px "Liberation Serif", serif; text-anchor: middle; fill: #fff; }
.db2 { font-size: 7px; text-anchor: middle; fill: #fff; }
.ep { font-size: 19px; fill: #6d3a80; }

.work { height: 667px; flex: none; display: flex; }
.side { width: 342px; flex: none; display: flex; flex-direction: column; }
.dock { display: flex; flex-direction: column; flex: none; }
.nav { height: 398px; }
.lay { height: 266px; }
.dockhead { height: 22px; flex: none; display: flex; align-items: center; padding: 0 1px 0 3px; gap: 2px; }
.dockhead span { flex: 1; padding-bottom: 2px; letter-spacing: .07px; }
.db { width: 12px; height: 12px; }
.docktools { flex: none; height: 29px; display: flex; align-items: center; padding: 0 0 3px 7px; gap: 9px; }
.docktools svg { width: 16px; height: 16px; }
.docktools em { margin: 0 -4px 0 -5px; padding: 0; }
.lay .dockhead { height: 25px; padding-top: 1px; }
.lay .docktools { height: 28px; padding-bottom: 4px; }
.treebox { flex: 1; min-height: 0; display: flex; background: #fff; border: 1px solid #b4b4b4; border-left: 0; overflow: hidden; letter-spacing: .07px; }
.tree { flex: 1; min-width: 0; overflow: hidden; }
.tree.up4 { margin-top: -7px; }
.r { height: 19px; display: flex; align-items: center; white-space: nowrap; }
.r > svg { width: 16px; height: 16px; margin-right: 6px; }
.x { width: 23px; display: flex; padding-left: 8px; }
.x::before { content: ""; border: 3.500px solid transparent; border-left: 4.500px solid #666; border-right: 0; }
.x.d { padding-left: 6px; }
.x.d::before { border: 4px solid transparent; border-top: 4.500px solid #666; border-bottom: 0; }
.x.n::before { display: none; }
.l1 { padding-left: 20px; }
.t { height: 22px; padding-left: 43px; }
.v { padding-left: 43px; }
.ck { width: 14px; height: 14px; background: #fff; border: 1px solid #bbb; margin-right: 6px; }
.ck svg { width: 14px; height: 14px; margin: -1px; }
.dot { width: 9px; height: 9px; border-radius: 50%; border: 1px solid #222; margin: 0 12px 0 5px; }
.dot.g { background: #7bd06d; } .dot.o { background: #ec6f30; } .dot.bl { background: #0a8cff; }
.sw { width: 16px; height: 16px; margin-right: 6px; }
.c1 { background: #440154; } .c2 { background: #3b528b; } .c3 { background: #21918c; } .c4 { background: #5ec962; } .c5 { background: #fde725; }
.sel { background: #308cc6; color: #fff; font-weight: 700; }
.sel .sw { border: 1px solid #246a96; }
.sel span { text-decoration: underline; text-underline-offset: 3px; text-decoration-thickness: 1px; text-decoration-skip-ink: none; }
.it { font-style: italic; font-weight: 700; color: #808080; letter-spacing: 0; }

.scroll { width: 14px; flex: none; display: flex; flex-direction: column; border-left: 1px solid #b4b4b4; background: linear-gradient(90deg, #eee, #fff); }
.up, .down { height: 14px; display: flex; align-items: center; justify-content: center; background: #f6f6f6; }
.up { border-bottom: 1px solid #b4b4b4; }
.down { border-top: 1px solid #b4b4b4; }
.up::before { content: ""; border: 4px solid transparent; border-bottom-color: #555; border-top: 0; }
.down::before { content: ""; border: 4px solid transparent; border-top-color: #555; border-bottom: 0; }
.track { flex: 1; }
.thumb { background: #e0e0e0; flex: none; }
.tall { height: 80px; border-top: 1px solid #b4b4b4; }
.tiny { height: 6px; border-bottom: 1px solid #b4b4b4; }
.hsplit { height: 3px; flex: none; background: radial-gradient(circle, #aaa 0 .7px, transparent .9px) 163px 0 / 3px 3px; background-clip: content-box; padding: 0 162px 0 163px; }
.vsplit { width: 6px; flex: none; background: radial-gradient(circle, #aaa 0 .7px, transparent .9px) 1.500px 0 / 3px 3px; background-clip: content-box; padding: 325px 1px 324px 2px; }
.map { width: 1251px; flex: none; height: 666px; margin-top: 1px; background: #fefefe; border: 1px solid #b4b4b4; overflow: hidden; }
.map path { vector-effect: non-scaling-stroke; }

.status { flex: 1; display: flex; align-items: center; padding: 0 7px 0 3px; font-size: 12px; white-space: nowrap; }
.status > * { flex: none; }
.search { width: 360px; height: 26px; display: flex; align-items: center; gap: 6px; padding-left: 8px; border: 1px solid #aaa; border-radius: 3px; background: #fff; color: #777; font-size: 15px; letter-spacing: .07px; }
.search svg { width: 14px; height: 14px; }
.lb { height: 18px; line-height: 18px; }
.fld { height: 24px; display: flex; align-items: center; border: 1px solid #b0b0b0; border-radius: 3px; background: #fff; padding-left: 4px; justify-content: space-between; }
.coord { width: 70px; margin-left: 341px; }
.f1 { width: 117px; padding-left: 8px; }
.mouse { width: 16px; height: 16px; margin: 0 13px 0 4px; }
.esc { width: 37px; }
.f2 { width: 97px; }
.combo { width: 20px; height: 22px; border-left: 1px solid #b0b0b0; background: #f6f6f6; display: flex; align-items: center; justify-content: center; }
.combo::before { content: ""; border: 4px solid transparent; border-top-color: #666; border-bottom: 0; }
.lock { width: 12px; height: 16px; margin: 0 9px 0 12px; }
.lupa { width: 30px; }
.f3 { width: 98px; }
.spin { width: 14px; height: 22px; border-left: 1px solid #b0b0b0; background: #f6f6f6; display: flex; flex-direction: column; align-items: center; justify-content: center; gap: 5px; }
.spin::before { content: ""; border: 3.500px solid transparent; border-bottom: 4px solid #666; border-top: 0; }
.spin::after { content: ""; border: 3.500px solid transparent; border-top: 4px solid #666; border-bottom: 0; }
.rot { width: 63px; padding-left: 9px; }
.f4 { width: 94px; }
.rend { margin: 0 5px 0 6px; }
.ren { width: 75px; letter-spacing: .15px; }
.crs { width: 16px; height: 16px; }
.epsg { width: 84px; padding-left: 2px; letter-spacing: .1px; }
.bub { width: 16px; height: 16px; }
```
